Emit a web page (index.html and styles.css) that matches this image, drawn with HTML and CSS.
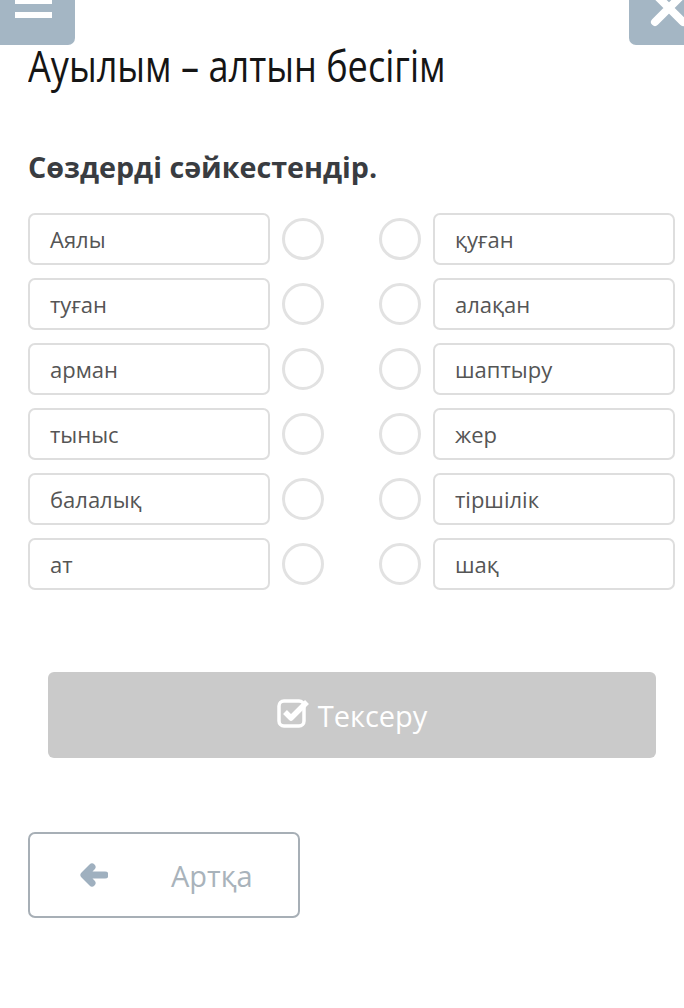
FILE: index.html
```html
<!DOCTYPE html>
<html lang="kk">

<head>
    <meta charset="UTF-8">
    <title>Ауылым – алтын бесігім</title>
    <link rel="stylesheet" href="styles.css">
</head>

<body>
    <div class="topbar">
        <div class="btn-menu">
            <span class="bar"></span>
            <span class="bar"></span>
        </div>
        <div class="btn-close">
            <svg width="40" height="40" viewBox="0 0 40 40">
                <path d="M6 -6 L34 22 M34 -6 L6 22" stroke="#fff" stroke-width="8" stroke-linecap="round"/>
            </svg>
        </div>
    </div>

    <div class="page">
        <h1 class="title">Ауылым – алтын бесігім</h1>
        <h2 class="task">Сөздерді сәйкестендір.</h2>

        <div class="match">
            <div class="row">
                <div class="word">Аялы</div>
                <span class="dot"></span>
                <span class="dot"></span>
                <div class="word">қуған</div>
            </div>
            <div class="row">
                <div class="word">туған</div>
                <span class="dot"></span>
                <span class="dot"></span>
                <div class="word">алақан</div>
            </div>
            <div class="row">
                <div class="word">арман</div>
                <span class="dot"></span>
                <span class="dot"></span>
                <div class="word">шаптыру</div>
            </div>
            <div class="row">
                <div class="word">тыныс</div>
                <span class="dot"></span>
                <span class="dot"></span>
                <div class="word">жер</div>
            </div>
            <div class="row">
                <div class="word">балалық</div>
                <span class="dot"></span>
                <span class="dot"></span>
                <div class="word">тіршілік</div>
            </div>
            <div class="row">
                <div class="word">ат</div>
                <span class="dot"></span>
                <span class="dot"></span>
                <div class="word">шақ</div>
            </div>
        </div>

        <div class="check">
            <svg width="32" height="30" viewBox="0 0 32 30">
                <rect x="2" y="3" width="25" height="25" rx="5" fill="none" stroke="#fff" stroke-width="3.5"/>
                <path d="M8 14 L14 20 L30 4" fill="none" stroke="#fff" stroke-width="5.5" stroke-linejoin="round"/>
            </svg>
            <span>Тексеру</span>
        </div>

        <div class="back">
            <svg width="30" height="24" viewBox="0 0 30 24">
                <path d="M27 12 H8 M14 4 L6 12 L14 20" fill="none" stroke="#9fb0bf" stroke-width="7" stroke-linecap="round" stroke-linejoin="round"/>
            </svg>
            <span>Артқа</span>
        </div>
    </div>
</body>

</html>
```

FILE: styles.css
```css
body {
    margin: 0;
    background: #fff;
    font-family: "Open Sans", "Noto Sans", sans-serif;
}

.topbar {
    display: flex;
    justify-content: space-between;
    height: 45px;
}

.btn-menu {
    width: 75px;
    height: 45px;
    background: #a4b6c4;
    border-radius: 0 0 7px 0;
    display: flex;
    flex-direction: column;
    gap: 9px;
    padding: 0 0 0 15px;
    box-sizing: border-box;
}

.btn-menu .bar {
    display: block;
    width: 37px;
    height: 4px;
    background: #fff;
}

.btn-menu .bar + .bar {
    height: 6px;
    margin-top: -1px;
}

.btn-close {
    width: 55px;
    height: 45px;
    background: #a4b6c4;
    border-radius: 0 0 0 7px;
    padding-left: 20px;
    box-sizing: border-box;
    overflow: hidden;
}

.page {
    padding: 0 8px 0 28px;
}

.title {
    margin: 0;
    font-size: 43px;
    font-weight: 400;
    line-height: 42px;
    color: #151515;
    transform: scaleX(0.84);
    transform-origin: left;
}

.task {
    margin: 60px 0 0;
    font-size: 28.7px;
    font-weight: 700;
    line-height: 40px;
    color: #393c41;
}

.match {
    margin-top: 26px;
    display: flex;
    flex-direction: column;
    gap: 13px;
}

.row {
    display: flex;
    align-items: center;
}

.word {
    width: 242px;
    height: 52px;
    box-sizing: border-box;
    border: 2px solid #dedede;
    border-radius: 7px;
    padding-left: 20px;
    font-size: 22px;
    line-height: 48px;
    color: #555;
}

.dot {
    width: 42px;
    height: 42px;
    box-sizing: border-box;
    border: 3px solid #e2e2e2;
    border-radius: 50%;
    margin-left: 12px;
}

.dot + .dot {
    margin-left: 55px;
}

.dot + .word {
    margin-left: 12px;
}

.check {
    margin: 82px 0 0 20px;
    width: 608px;
    height: 86px;
    background: #cacaca;
    border-radius: 6px;
    display: flex;
    align-items: center;
    justify-content: center;
    gap: 9px;
    color: #fff;
    font-size: 29px;
}

.check svg {
    margin-top: -4px;
}

.back {
    margin-top: 74px;
    width: 272px;
    height: 86px;
    box-sizing: border-box;
    border: 2px solid #a7afb6;
    border-radius: 7px;
    display: flex;
    align-items: center;
    padding-left: 48px;
    color: #a9b3bb;
    font-size: 29px;
}

.back span {
    margin-left: 63px;
}
```
